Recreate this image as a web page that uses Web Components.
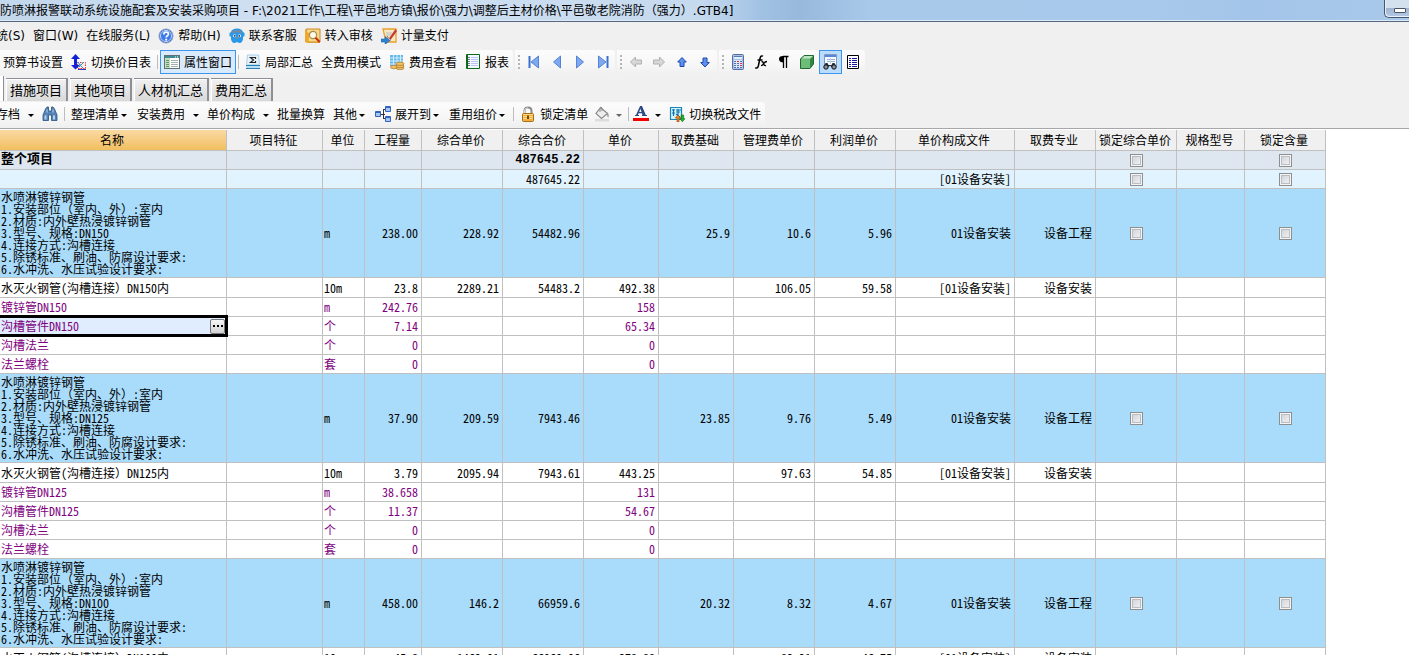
<!DOCTYPE html>
<html lang="zh-CN">
<head>
<meta charset="utf-8">
<title>平邑敬老院消防（强力）.GTB4</title>
<style>
html,body{margin:0;height:100%;overflow:hidden;background:#fff;color:#000;font:12px/16px "DejaVu Sans","Noto Sans CJK SC",sans-serif}
</style>
</head>
<body>
<app-window>
  <title-bar slot="title">防喷淋报警联动系统设施配套及安装采购项目 - F:\2021工作\工程\平邑地方镇\报价\强力\调整后主材价格\平邑敬老院消防（强力）.GTB4]</title-bar>
  <menu-row slot="bars">
    <tool-item>统(S)</tool-item><tool-item>窗口(W)</tool-item><tool-item>在线服务(L)</tool-item>
    <tool-item icon="help">帮助(H)</tool-item><tool-item icon="service">联系客服</tool-item>
    <tool-item icon="audit">转入审核</tool-item><tool-item icon="pay">计量支付</tool-item>
  </menu-row>
  <bar-row slot="bars">
    <tool-group>
      <tool-item>预算书设置</tool-item><tool-item icon="switch">切换价目表</tool-item><tool-sep></tool-sep>
      <tool-item icon="props" pressed>属性窗口</tool-item><tool-sep></tool-sep>
      <tool-item icon="sigma">局部汇总</tool-item><tool-item>全费用模式</tool-item>
      <tool-item icon="coins">费用查看</tool-item><tool-item icon="report">报表</tool-item>
    </tool-group>
    <tool-group grip>
      <tool-item compact icon="first" label="首条"></tool-item><tool-item compact icon="prev" label="上一条"></tool-item>
      <tool-item compact icon="next" label="下一条"></tool-item><tool-item compact icon="last" label="末条"></tool-item>
    </tool-group>
    <tool-group grip>
      <tool-item compact icon="left" label="左移"></tool-item><tool-item compact icon="right" label="右移"></tool-item>
      <tool-item compact icon="up" label="上移"></tool-item><tool-item compact icon="down" label="下移"></tool-item>
    </tool-group>
    <tool-group grip>
      <tool-item compact icon="calc" label="计算器"></tool-item><tool-item compact icon="fx" label="公式"></tool-item>
      <tool-item compact icon="para" label="段落"></tool-item><tool-item compact icon="cube" label="图元"></tool-item>
      <tool-item compact icon="find" label="查找" pressed></tool-item><tool-item compact icon="list" label="列表"></tool-item>
    </tool-group>
  </bar-row>
  <tab-row slot="bars"></tab-row>
  <bar-row slot="bars" class="edit">
    <tool-group>
      <tool-item arrow="split">存档</tool-item><tool-item icon="binoc" label="查找"></tool-item><tool-sep></tool-sep>
      <tool-item arrow="menu">整理清单</tool-item><tool-item arrow="split">安装费用</tool-item>
      <tool-item arrow="split">单价构成</tool-item><tool-item>批量换算</tool-item>
      <tool-item arrow="menu">其他</tool-item><tool-item icon="tree" arrow="menu">展开到</tool-item>
      <tool-item arrow="menu">重用组价</tool-item><tool-sep></tool-sep>
      <tool-item icon="lock">锁定清单</tool-item><tool-item icon="bucket" arrow="split" label="填充" dim></tool-item><tool-sep></tool-sep>
      <tool-item icon="fontcolor" arrow="split" label="字体颜色"></tool-item><tool-item icon="tax">切换税改文件</tool-item>
    </tool-group>
  </bar-row>
  <price-grid></price-grid>
</app-window>

<script>
const ICONS = {
help:'<circle cx="8" cy="8" r="7" fill="#2a62d8" stroke="#8b9fc4"/><circle cx="8" cy="8" r="5.6" fill="#3d7be8" stroke="#dfe9fb" stroke-width=".8"/><path d="M5.8 6.4q0-2.3 2.3-2.3t2.3 2q0 1.200-1.300 1.900-.9.5-.9 1.500" fill="none" stroke="#fff" stroke-width="1.7"/><circle cx="8.200" cy="11.700" r="1.100" fill="#fff"/>',
service:'<path d="M2 4Q3 .5 8 .5T14 4l1.500 1v3L14 9q.5 4-2.500 6-1.500.4-3.500-1-2 1.400-3.500 1Q1.500 13 2 9L.5 8V5z" fill="#2a98e8"/><path d="M2.500 4Q8 0 13.500 4l-.6 1.300Q8 3 3.100 5.300z" fill="#7d8a99"/><circle cx="5.500" cy="7.800" r="1.500" fill="#e9f6ff"/><circle cx="10.500" cy="7.800" r="1.500" fill="#e9f6ff"/><circle cx="5.700" cy="7.900" r=".8" fill="#124"/><circle cx="10.300" cy="7.900" r=".8" fill="#124"/><path d="M7 9.500h2l-1 1.500z" fill="#e58a1c"/>',
audit:'<path d="M0 2l5-1 1 4 9-4v14H1z" fill="#efb743"/><path d="M1 1h14v13H3z" fill="#f8d98a" stroke="#cc8a22"/><path d="M0 2l5 4-2 8H0z" fill="#f1a72a"/><circle cx="8" cy="7" r="3.600" fill="#fff9e8" stroke="#a88b55" stroke-width="1.200"/><path d="M10.600 9.600l4 4.400" stroke="#c62c10" stroke-width="2"/>',
pay:'<path d="M2 1h13v13H5z" fill="#f6e8c8" stroke="#e9a02b" stroke-width="1.300"/><path d="M5 5h6M5 7h5" stroke="#b8bcc8"/><path d="M14.500 1l1.500 2-6.500 9-2-1z" fill="#c83a2b"/><path d="M6 8l4 4-2 1z" fill="#eee" stroke="#844" stroke-width=".5"/><path d="M0 11h4V8.500l5 4-5 4V14H0z" fill="#2c83d2" stroke="#12599f" stroke-width=".5"/>',
switch:'<path d="M6.500 8.500h8v6h-8z" fill="#ffe9e9" stroke="#e33" stroke-dasharray="1.500 1"/><path d="M8 13l5-5M8 10l4 4M6.500 8l3 3" stroke="#18a4b6"/><path d="M4.500 0L9 5H6v6h3l-4.500 4.500L0 11h3V5H0z" fill="#1520d8"/><path d="M7 15.500h8" stroke="#2a38c8"/>',
props:'<rect x=".5" y="1.500" width="15" height="13" fill="#fff" stroke="#5e7076"/><path d="M1 2h14v2H1z" fill="#3c8c95"/><path d="M11 3h1M13 3h1" stroke="#fff"/><path d="M1 4h5v10H1z" fill="#c6dfc3"/><path d="M2 6.500h3M2 8.500h3M2 10.500h3M2 12.500h3" stroke="#5d9865"/><path d="M7 6.500h7M7 8.500h7M7 10.500h7M7 12.500h7" stroke="#a8b0b0"/>',
sigma:'<path d="M2.500 1h11l1 10h-13z" fill="#e6f3fb" stroke="#a8cfe8"/><path d="M10.500 5V3.500h-5L8.500 6l-3 2.500h5V7" fill="none" stroke="#222" stroke-width="1.200"/><path d="M1 10h14v4H1z" fill="#b8dff5"/><path d="M1 11.500h14M1 14.500h14" stroke="#2f7fae"/>',
coins:'<path d="M1 1h13v11H1z" fill="#66b8ea"/><path d="M1 4h13M1 7h13M1 10h8M4.500 1v11M8 1v11M11.500 1v7" stroke="#d8f0ff" stroke-width=".9"/><g fill="#f0c063" stroke="#a8762a" stroke-width=".7"><ellipse cx="5" cy="13" rx="3.500" ry="1.800"/><ellipse cx="11" cy="14" rx="4" ry="1.700"/><ellipse cx="11" cy="12" rx="4" ry="1.700"/><ellipse cx="11" cy="9.800" rx="4" ry="1.700"/></g>',
report:'<path d="M1.500.5h13v14h-13z" fill="#f5f7ff" stroke="#0b6b1a"/><path d="M2.500 1v13" stroke="#0b6b1a"/><path d="M6 3.500h7M6 5.500h7M6 7.500h7M6 9.500h7M6 11.500h7" stroke="#b9c6f5"/><path d="M3 3.500h2M3 5.500h2M3 7.500h2M3 9.500h2M3 11.500h2" stroke="#778"/>',
first:'<path d="M3.500 2v12" stroke="#3a6fd2" stroke-width="2"/><path d="M12.500 2v12L5 8z" fill="#7fa9ee" stroke="#3a6fd2" stroke-width=".8"/>',
prev:'<path d="M11.500 2v12L4.500 8z" fill="#7fa9ee" stroke="#3a6fd2" stroke-width=".8"/>',
next:'<path d="M4.500 2v12l7-6z" fill="#7fa9ee" stroke="#3a6fd2" stroke-width=".8"/>',
last:'<path d="M12.500 2v12" stroke="#3a6fd2" stroke-width="2"/><path d="M3.500 2v12L11 8z" fill="#7fa9ee" stroke="#3a6fd2" stroke-width=".8"/>',
left:'<path d="M2.500 8l5-5v3h6v4h-6v3z" fill="#d7d7d7" stroke="#b0b0b0"/>',
right:'<path d="M13.500 8l-5-5v3h-6v4h6v3z" fill="#d7d7d7" stroke="#b0b0b0"/>',
up:'<path d="M8 3.500l4.300 4.500H10v4.500H6V8H3.700z" fill="#5f90ee" stroke="#1c49b0"/>',
down:'<path d="M8 13l4.300-4.500H10V4H6v4.500H3.700z" fill="#5f90ee" stroke="#1c49b0"/>',
calc:'<rect x="2.500" y=".5" width="11" height="15" rx="1" fill="#a9c1e6" stroke="#55709f"/><path d="M4 2h8v3H4z" fill="#e3effb"/><path d="M4 2.500h8" stroke="#5b79aa"/><path d="M4 6h8v8H4z" fill="#dbe6f7"/><path d="M4 7.500h8M4 9.500h8M4 11.500h8M4 13.500h8" stroke="#5573b4" stroke-dasharray="2 1"/><path d="M7 7.500h2M10 9.500h2M10 11.500h2" stroke="#d33"/>',
fx:'<path d="M10 2.200Q7.800 1 7 4.500L5.300 12q-.8 3-3 1.600M4.500 6h5" fill="none" stroke="#000" stroke-width="1.500"/><path d="M8.500 8q1.500-1 2 1.500t2.500 2M14 7.500Q12 7.500 10.800 9.500T8 11.700" fill="none" stroke="#000" stroke-width="1.300"/>',
para:'<path d="M7.500 2v12M10.500 2v12M12.500 2.500H7" stroke="#000" stroke-width="1.300" fill="none"/><path d="M8 2Q3 1.500 3 5t5 3.500z" fill="#000"/>',
cube:'<path d="M1.500 5L5 1.500h9.500V10L11 14.500H1.500z" fill="#2f8843" stroke="#1f6a30"/><path d="M2 5h9v9H2z" fill="#6dbd79"/><path d="M2.500 4.700L5.300 2H14l-2.800 2.700z" fill="#b7e3bd"/>',
find:'<path d="M2.500.5h12v11h-12z" fill="#f8fbff" stroke="#7d9ad0"/><path d="M3 1h11v2H3z" fill="#5a86d8"/><path d="M5 5.500h8M5 7.500h8" stroke="#9ab0d8"/><path d="M8.500 4v6" stroke="#c4d2ec"/><path d="M3.500 9h2l1 2h3l1-2h2l2 4H9.500l-1-1h-1l-1 1H1.500z" fill="#29323c"/><circle cx="4" cy="13" r="2.200" fill="#8794a2" stroke="#111"/><circle cx="12" cy="13" r="2.200" fill="#8794a2" stroke="#111"/>',
list:'<path d="M2.500 1.500h11v13h-11z" fill="#fff" stroke="#000"/><path d="M7 4.500h5M7 6.500h5M7 8.500h5M7 10.500h5M7 12.500h5M4 4.500h2M4 6.500h2M4 8.500h2M4 10.500h2M4 12.500h2" stroke="#1818a0"/>',
binoc:'<path d="M3.500 3L5 1h1.500v4h3V1H11l1.500 2L15 9v5.500H9.500V9h-3v5.500H1V9z" fill="#5784b8" stroke="#24507f" stroke-width=".8"/><path d="M2.500 9.500h2v4h-2zM11 9.500h2v4h-2zM4.500 3.500h1v3h-1zM10.500 3.500h1v3h-1z" fill="#b4d0ee"/>',
tree:'<path d="M5 8.500h5M8.500 3.500v9M8 3.500h3M8 12.500h3" stroke="#333" fill="none"/><g fill="#a5c7f7" stroke="#3565b8"><path d="M.5 5.500h5v5h-5zM10.500.5h5v5h-5zM10.500 10.500h5v5h-5z"/></g><path d="M1 6.500h4M11 1.500h4M11 11.500h4" stroke="#2f62c4"/>',
lock:'<path d="M4.500 8V4.800Q4.500 1.500 8 1.500t3.500 3.300V8" fill="none" stroke="#8c8c8c" stroke-width="2"/><path d="M4.500 8V5Q4.500 1.800 8 1.800" fill="none" stroke="#ddd"/><rect x="2.500" y="7.500" width="11" height="8" rx="1" fill="#efb23d" stroke="#a86d12"/><path d="M3 8.500h10M3 10.500h10M3 12.500h10" stroke="#fae09a" stroke-width=".8"/><path d="M8 9.500v3.500" stroke="#60400a" stroke-width="1.800"/>',
bucket:'<path d="M6.500 1.500l7 6-6 5-5.500-5z" fill="#eee" stroke="#8a8a8a" stroke-width="1.200"/><path d="M6 6V2Q7 0 8 2v3" fill="none" stroke="#8a8a8a"/><path d="M12.500 6q3 1.500 2 5.500-1.500-.5-1.500-3z" fill="#999"/><path d="M1 13h14v2.500H1z" fill="#dcdcdc"/>',
fontcolor:'<path d="M7.200 0h1.800l4 9.500H9.700l-.8-2.300H5.600l-.9 2.300H2.800L6.600 1zM6.200 6h2.300L7.400 2.800z" fill="#2c4a85"/><path d="M2 9.500h4M9 9.500h5" stroke="#2c4a85"/><path d="M0 12h16v3H0z" fill="#f00000"/>',
tax:'<path d="M1.500 1.500h11v12h-11z" fill="#d6f2fb" stroke="#1c86b8" stroke-width="1.200"/><path d="M3 4h3M4.500 3v7M3 7h3M7 4h5M7 6h4M9 3v8M7 8l4 3" stroke="#0c77ad" fill="none" stroke-width="1.200"/><path d="M8 16v-4H6.300L9 9l2.700 3H10v4z" fill="#f08a24" stroke="#8a3f00" stroke-width=".6"/><path d="M12.300 9v3.600H10.800l2.600 3.200 2.600-3.200h-1.400V9z" fill="#1fb528" stroke="#08660e" stroke-width=".6"/>'
};

const define = (name, css, html) => customElements.define(name, class extends HTMLElement {
  connectedCallback() {
    if (this.shadowRoot) return;
    const root = this.attachShadow({mode: 'open'});
    root.innerHTML = `<style>${css}</style>${typeof html === 'function' ? html(this) : html}`;
  }
});

define('app-window', `
:host{display:flex;flex-direction:column;min-height:100%;background:#fff}
.bars{background:#f0f0f0;padding-bottom:2px;border-bottom:1px solid #a7a6aa;margin-bottom:1px}`,
`<slot name="title"></slot><div class="bars"><slot name="bars"></slot></div><slot></slot>`);

define('title-bar', `
:host{display:flex;justify-content:space-between;height:20px;border-bottom:1px solid #56677f;box-shadow:inset 0 -1px #dce9f7;
 background:linear-gradient(90deg,#c3d7ed 0,#d0e0f1 300px,#c6daef 700px,#a2c2e4 760px,#98b9dc 800px,#a9c9ea 870px,#a8c9eb 1150px,#a3c5e9 1250px,#a9c9ea);padding-bottom:1px}
span{white-space:nowrap;line-height:22px}
button{width:25px;height:18px;padding:0;border:1px solid #46566c;border-top:0;border-right:0;border-radius:0 0 0 5px;
 background:linear-gradient(#d3e0ee 0 45%,#9db3cf 46%,#b5cbe4);box-shadow:inset 1px -1px #e8f1fa;display:flex;align-items:center;justify-content:flex-end}
i{display:block;width:10px;height:3px;margin:3px 3px 0 0;background:#fff;border:1px solid #4c5568;border-radius:1px}`,
`<span><slot></slot></span><button aria-label="最小化"><i></i></button>`);

define('menu-row', `:host{display:flex;align-items:center;height:28px;margin-left:-8px}`, `<slot></slot>`);
define('bar-row', `:host{display:flex;gap:2px;height:24px;margin-left:-1px;--drop:1px}:host(.edit){margin-left:-8px}`, `<slot></slot>`);

define('tool-group', `
:host{display:flex;align-items:center;border-radius:0 3px 3px 0;background:linear-gradient(#fcfcfc,#f7f7f7 60%,#f0f0f0)}
.grip{width:2px;height:14px;margin:0 3px;background:repeating-linear-gradient(#b4b4b4 0 2px,transparent 2px 4px)}`,
el => `${el.hasAttribute('grip') ? '<div class="grip"></div>' : ''}<slot></slot>`);

define('tool-sep', `:host{display:block;width:1px;height:14px;margin:0 2px;background:#bdbdbd}`, ``);

define('tool-item', `
:host{display:block}
button{display:flex;align-items:center;box-sizing:border-box;height:24px;margin:0;padding:0 3px;border:1px solid transparent;background:none;color:inherit;font:inherit;white-space:nowrap}
:host([pressed]) button{border-color:#3c96f0;background:#d9eafc}
:host([pressed][compact]) button{background:#bcdcfb}
:host([compact]) button{padding:0 2px;width:23px}
svg{width:16px;height:16px;flex:none}
span{padding-top:calc(var(--drop,0px) * 2)}
svg + span{margin-left:4px}
b{display:flex;justify-content:center;width:10px;padding-top:calc(var(--drop,0px) * 2)}
b::after{content:"";border:3px solid transparent;border-top-color:#000;border-bottom:0}
:host([dim]) b::after{border-top-color:#666}
:host([arrow=split]) button{padding-right:0;border-right:0}
:host([arrow=split]) b{width:14px;margin-left:4px}
:host([arrow=split][icon]) button{padding-left:1px}
:host([arrow=split][icon]) b{margin-left:2px}`,
el => {
  const icon = el.getAttribute('icon'), label = el.getAttribute('label');
  return `<button${label ? ` aria-label="${label}"` : ''}>${icon ? `<svg viewBox="0 0 16 16" aria-hidden="true">${ICONS[icon]}</svg>` : ''}` +
    `${label ? '' : '<span><slot></slot></span>'}${el.hasAttribute('arrow') ? '<b></b>' : ''}</button>`;
});

define('tab-row', `
:host{display:flex;align-items:flex-end;gap:2px;height:28px;box-sizing:border-box;padding-bottom:1px}
i{width:4px;height:25px;background:#fff;border-right:1px solid #8e8e96;box-sizing:border-box}
button{height:23px;margin:0;padding:0 4px;border:1px solid #8e8e96;border-width:1px 2px 0 0;box-shadow:inset 1px 1px #fff;
 background:linear-gradient(#f1f1f1,#d9d9d9);color:#000;font:13px/20px "Noto Sans CJK SC",sans-serif}`,
`<i></i>` + ['措施项目','其他项目','人材机汇总','费用汇总'].map(t => `<button role="tab">${t}</button>`).join(''));

const COLS = [['名称',227],['项目特征',96],['单位',42],['工程量',57],['综合单价',81],['综合合价',81],['单价',75],['取费基础',75],
  ['管理费单价',81],['利润单价',81],['单价构成文件',119],['取费专业',81],['锁定综合单价',81],['规格型号',68],['锁定含量',81]];
const FILE = '[01设备安装]';
const spec = dn => `水喷淋镀锌钢管\n1.安装部位（室内、外）:室内\n2.材质:内外壁热浸镀锌钢管\n3.型号、规格:${dn}\n4.连接方式:沟槽连接\n5.除锈标准、刷油、防腐设计要求:\n6.水冲洗、水压试验设计要求:`;
const item = (dn, q, p, t, base, m, r) => ['item', spec(dn), '', 'm', q, p, t, '', base, m, r, '01设备安装', '设备工程'];
const quota = (dn, q, p, t, u, m, r) => ['quota', `水灭火钢管(沟槽连接）${dn}内`, '', '10m', q, p, t, u, '', m, r, FILE, '设备安装'];
const mat = (name, unit, q, u, cls = '') => ['mat ' + cls, name, '', unit, q, '', '', u, '', '', '', '', ''];
const ROWS = [
  ['total', '整个项目', '', '', '', '', '487645.22', '', '', '', '', '', ''],
  ['unit', '', '', '', '', '', '487645.22', '', '', '', '', FILE, ''],
  item('DN150', '238.00', '228.92', '54482.96', '25.9', '10.6', '5.96'),
  quota('DN150', '23.8', '2289.21', '54483.2', '492.38', '106.05', '59.58'),
  mat('镀锌管DN150', 'm', '242.76', '158'), mat('沟槽管件DN150', '个', '7.14', '65.34', 'active'),
  mat('沟槽法兰', '个', '0', '0'), mat('法兰螺栓', '套', '0', '0'),
  item('DN125', '37.90', '209.59', '7943.46', '23.85', '9.76', '5.49'),
  quota('DN125', '3.79', '2095.94', '7943.61', '443.25', '97.63', '54.85'),
  mat('镀锌管DN125', 'm', '38.658', '131'), mat('沟槽管件DN125', '个', '11.37', '54.67'),
  mat('沟槽法兰', '个', '0', '0'), mat('法兰螺栓', '套', '0', '0'),
  item('DN100', '458.00', '146.2', '66959.6', '20.32', '8.32', '4.67'),
  quota('DN100', '45.8', '1462.01', '66960.06', '378.88', '83.21', '46.75')
];

define('price-grid', `
:host{display:block;font:12px/12px "Noto Sans Mono CJK SC","Noto Sans CJK SC",monospace}
table{table-layout:fixed;width:0;border-collapse:separate;border-spacing:0}
th,td{box-sizing:border-box;height:19px;padding:0 3px 0 1px;border:solid #c0c0c0;border-width:0 1px 1px 0;white-space:pre;text-align:right;vertical-align:middle;font-weight:400}
th{height:21px;padding:0 2px 0 0;text-align:center;background:#f0f0f0}
th:first-child{background:linear-gradient(#fad9a2,#f1bf60)}
td:nth-child(1),td:nth-child(3){text-align:left}
td:nth-child(13),td:nth-child(15){padding:0 0 0 1px}
.total td{background:#dee6f0;font-weight:700;font-family:"Liberation Mono","Noto Sans Mono CJK SC",monospace}
.total td:first-child{font-size:13px}
.unit td{background:#e1f3ff}
.item td{height:89px;background:#a9dbfb}
.quota td{height:20px}
.mat td{color:#800080}
.active td:first-child{position:relative;background:#dfedff;padding-right:1px}
.active td:first-child::after{content:"";position:absolute;inset:-2px -2px -2px -3px;border:3px solid #000;pointer-events:none}
.edit{display:flex;align-items:center;justify-content:space-between}
button{width:15px;height:15px;margin:0;padding:0;border:1px solid #777;border-radius:2px;background:linear-gradient(#f6f6f6,#d2d2d2);display:flex;align-items:center;justify-content:center;gap:2px}
button i{width:2px;height:2px;background:#000}
input{appearance:none;display:block;width:13px;height:13px;margin:0 auto;border:1px solid #8e8f8f;background:linear-gradient(135deg,#cbcfd5,#f6f6f6);box-shadow:inset 0 0 0 1px #f4f4f4,inset 0 0 0 2px #b9bec4}`,
() => {
  const cell = (row, i) => {
    const cls = row[0];
    if (i === 12 || i === 14) return /total|unit|item/.test(cls) ? `<td><input type="checkbox" aria-label="${COLS[i][0]}"></td>` : '<td></td>';
    const text = row[i + 1] || '';
    if (i === 0 && cls.includes('active')) return `<td><div class="edit">${text}<button aria-label="编辑"><i></i><i></i><i></i></button></div></td>`;
    return `<td>${text}</td>`;
  };
  return `<table><colgroup>${COLS.map(c => `<col style="width:${c[1]}px">`).join('')}</colgroup>
<thead><tr>${COLS.map(c => `<th scope="col">${c[0]}</th>`).join('')}</tr></thead>
<tbody>${ROWS.map(r => `<tr class="${r[0]}">${COLS.map((c, i) => cell(r, i)).join('')}</tr>`).join('')}</tbody></table>`;
});
</script>
</body>
</html>
